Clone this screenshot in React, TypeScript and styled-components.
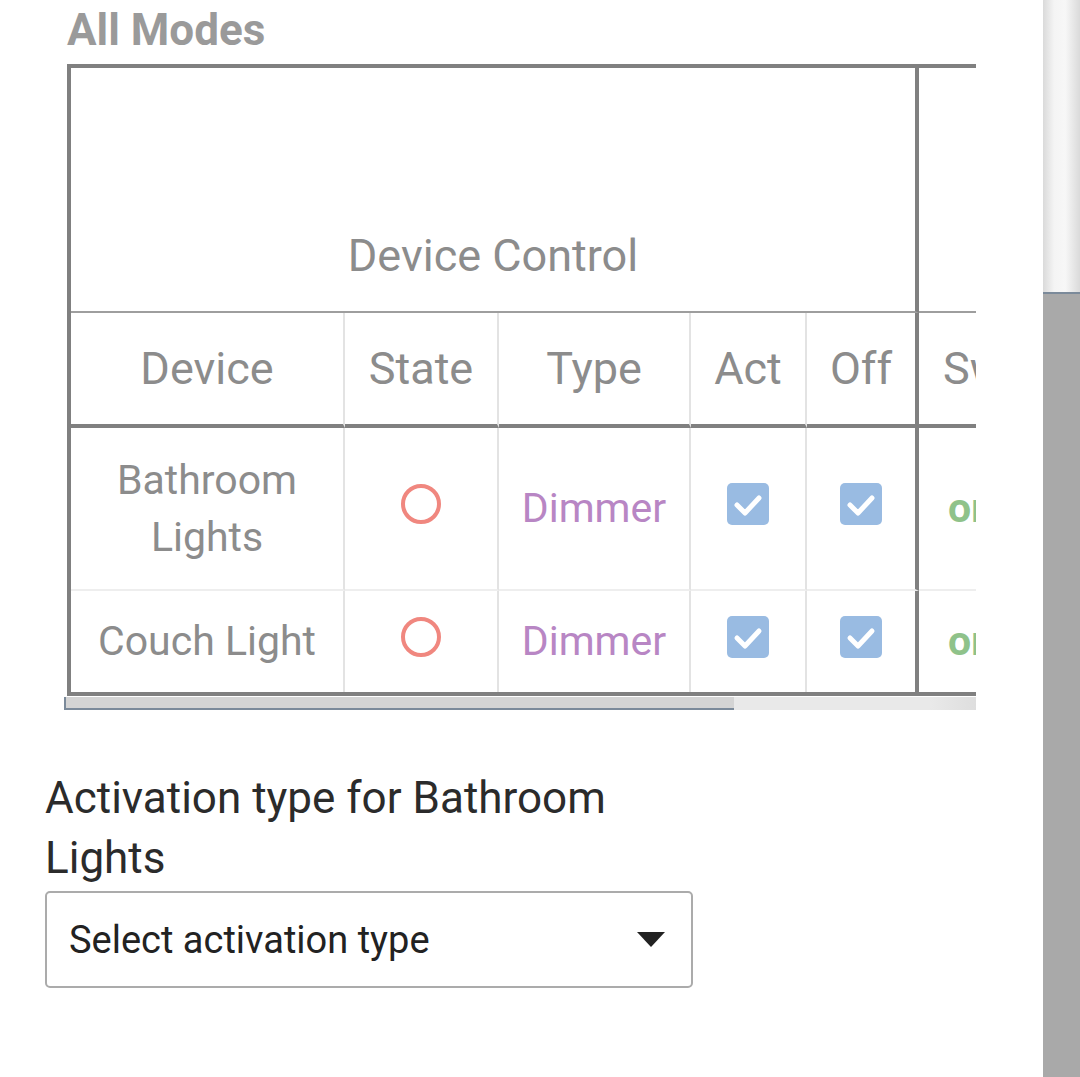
import styled, { createGlobalStyle } from 'styled-components';

const GlobalStyle = createGlobalStyle`
  * { box-sizing: border-box; }
  html, body { margin: 0; padding: 0; background: #fff; }
  body { font-family: Roboto, "Noto Sans", Arial, sans-serif; overflow: hidden; }
`;

const Page = styled.div`
  display: flex;
  width: 1080px;
  height: 1077px;
  overflow: hidden;
`;

const Main = styled.main`
  flex: 1;
  display: flex;
  flex-direction: column;
  padding: 4px 0 0 45px;
`;

const Section = styled.section`
  margin-left: 19px;
  width: 912px;
`;

const Title = styled.h2`
  margin: 0 0 8px 3px;
  font-size: 44px;
  line-height: 52px;
  font-weight: 700;
  color: #9a9a9a;
`;

const ScrollBox = styled.div`
  width: 912px;
  overflow: hidden;
`;

const Table = styled.table`
  width: 1100px;
  margin-left: 3px;
  border-collapse: separate;
  border-spacing: 0;
  table-layout: fixed;
  border-left: 4px solid #808080;
  border-top: 4px solid #808080;
  border-bottom: 4px solid #808080;
  color: #8c8c8c;
`;

const Col = styled.col<{ $w: number }>`
  width: ${p => p.$w}px;
`;

const GroupHead = styled.th<{ $end?: boolean }>`
  height: 245px;
  padding: 0 0 28px;
  vertical-align: bottom;
  font-size: 45px;
  line-height: 54px;
  font-weight: 400;
  text-align: center;
  border-bottom: 2px solid #9e9e9e;
  border-right: ${p => (p.$end ? '4px solid #808080' : 'none')};
  white-space: nowrap;
`;

const ColHead = styled.th<{ $end?: boolean; $left?: boolean }>`
  height: 115px;
  padding: ${p => (p.$left ? '0 0 0 24px' : '0')};
  font-size: 45px;
  line-height: 54px;
  font-weight: 400;
  text-align: ${p => (p.$left ? 'left' : 'center')};
  vertical-align: middle;
  border-bottom: 4px solid #808080;
  border-right: ${p => (p.$end ? '4px solid #808080' : '2px solid #e3e3e3')};
  white-space: nowrap;
`;

const Cell = styled.td<{ $end?: boolean; $last?: boolean; $left?: boolean; $h: number }>`
  height: ${p => p.$h}px;
  padding: ${p => (p.$left ? '0 4px 0 29px' : '0 4px')};
  font-size: 41px;
  line-height: 57px;
  text-align: ${p => (p.$left ? 'left' : 'center')};
  vertical-align: middle;
  border-bottom: ${p => (p.$last ? 'none' : '2px solid #eeeeee')};
  border-right: ${p => (p.$end ? '4px solid #808080' : '2px solid #e3e3e3')};
`;

const TypeText = styled.span`
  color: #b886c4;
`;

const OnText = styled.span`
  color: #8fc28a;
  font-weight: 700;
`;

const StateDot = styled.span`
  display: block;
  margin: 0 auto 10px;
  width: 40px;
  height: 40px;
  border: 4px solid #f0877f;
  border-radius: 50%;
`;

const Check = styled.span`
  display: flex;
  align-items: center;
  justify-content: center;
  margin: 0 auto 10px;
  width: 42px;
  height: 42px;
  border-radius: 5px;
  background: #99bbe2;
`;

const HScroll = styled.div`
  margin-top: 1px;
  height: 13px;
  width: 912px;
  background: linear-gradient(to right, #e9e9e9 95%, #dedede);
`;

const HThumb = styled.div`
  width: 670px;
  height: 13px;
  background: #d4d4d4;
  border-left: 2px solid #7b8a9a;
  border-bottom: 2px solid #7b8a9a;
`;

const Field = styled.div`
  margin-top: 58px;
  width: 648px;
`;

const Label = styled.label`
  display: block;
  font-size: 44px;
  line-height: 60px;
  color: #2b2b2b;
`;

const Select = styled.div`
  margin-top: 3px;
  height: 97px;
  display: flex;
  align-items: center;
  justify-content: space-between;
  padding: 0 26px 0 22px;
  border: 2px solid #ababab;
  border-radius: 5px;
  font-size: 38px;
  color: #222;
`;

const Caret = styled.span`
  width: 0;
  height: 0;
  border-left: 14px solid transparent;
  border-right: 14px solid transparent;
  border-top: 15px solid #222;
`;

const VScroll = styled.div`
  width: 37px;
  display: flex;
  flex-direction: column;
  background: #a9a9a9;
`;

const VThumb = styled.div`
  height: 294px;
  background: linear-gradient(to right, #dadada, #f4f4f4 30%, #f7f7f7 60%, #dadada);
  border-bottom: 2px solid #7b8a9a;
`;

const CheckBox = () => (
  <Check>
    <svg width="42" height="42" viewBox="0 0 42 42">
      <polyline points="10,22 18,30 32,15" fill="none" stroke="#fff" strokeWidth="5" strokeLinecap="round" strokeLinejoin="round" />
    </svg>
  </Check>
);

const devices = [
  { name: 'Bathroom Lights', h: 163 },
  { name: 'Couch Light', h: 101 },
];

const widths = [274, 154, 192, 116, 112, 248];

export default function App() {
  return (
    <Page>
      <GlobalStyle />
      <Main>
        <Section>
          <Title>All Modes</Title>
          <ScrollBox>
            <Table>
              <colgroup>
                {widths.map((w, i) => (
                  <Col key={i} $w={w} />
                ))}
              </colgroup>
              <thead>
                <tr>
                  <GroupHead colSpan={5} $end>Device Control</GroupHead>
                  <GroupHead />
                </tr>
                <tr>
                  <ColHead>Device</ColHead>
                  <ColHead>State</ColHead>
                  <ColHead>Type</ColHead>
                  <ColHead>Act</ColHead>
                  <ColHead $end>Off</ColHead>
                  <ColHead $left>Switch</ColHead>
                </tr>
              </thead>
              <tbody>
                {devices.map((d, i) => {
                  const last = i === devices.length - 1;
                  return (
                    <tr key={d.name}>
                      <Cell $h={d.h} $last={last}>{d.name}</Cell>
                      <Cell $h={d.h} $last={last}><StateDot /></Cell>
                      <Cell $h={d.h} $last={last}><TypeText>Dimmer</TypeText></Cell>
                      <Cell $h={d.h} $last={last}><CheckBox /></Cell>
                      <Cell $h={d.h} $last={last} $end><CheckBox /></Cell>
                      <Cell $h={d.h} $last={last} $left><OnText>on</OnText></Cell>
                    </tr>
                  );
                })}
              </tbody>
            </Table>
          </ScrollBox>
          <HScroll>
            <HThumb />
          </HScroll>
        </Section>
        <Field>
          <Label>Activation type for Bathroom Lights</Label>
          <Select>
            <span>Select activation type</span>
            <Caret />
          </Select>
        </Field>
      </Main>
      <VScroll>
        <VThumb />
      </VScroll>
    </Page>
  );
}
